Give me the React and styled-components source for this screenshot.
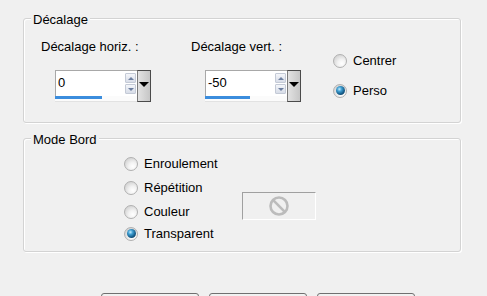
import React from "react";
import styled, { createGlobalStyle } from "styled-components";

const Global = createGlobalStyle`
  html, body { margin: 0; padding: 0; background: #f0f0f0; }
  body { font-family: "Liberation Sans", Arial, sans-serif; font-size: 13px; color: #000; }
`;

const Page = styled.div`
  width: 487px;
  height: 296px;
  overflow: hidden;
  box-sizing: border-box;
  padding: 18px 0 0 23px;
  background: #f0f0f0;
`;

const GroupBox = styled.div`
  position: relative;
  box-sizing: border-box;
  width: 438px;
  height: ${(p) => p.$h}px;
  margin-top: ${(p) => p.$mt || 0}px;
  border: 1px solid #d3d3d3;
  border-radius: 3px;
  box-shadow: inset 1px 1px 0 #ffffff, 1px 1px 0 #ffffff;
  padding: ${(p) => p.$pad};
`;

const Legend = styled.span`
  position: absolute;
  top: -7px;
  left: 7px;
  padding: 0 2px;
  line-height: 15px;
  background: #f0f0f0;
`;

const Row = styled.div`
  display: flex;
  align-items: flex-start;
`;

const Field = styled.div`
  display: flex;
  flex-direction: column;
  width: ${(p) => p.$w}px;
`;

const Label = styled.div`
  line-height: 15px;
  height: 15px;
`;

const Spin = styled.div`
  display: flex;
  margin: 16px 0 0 14px;
  height: 32px;
`;

const SpinMain = styled.div`
  display: flex;
  flex-direction: column;
  width: 82px;
`;

const Input = styled.div`
  box-sizing: border-box;
  height: 27px;
  display: flex;
  align-items: flex-start;
  justify-content: space-between;
  background: #fff;
  border: 1px solid #a8a8a8;
  border-right: none;
  border-bottom: none;
  padding: 3px 1px 0 2px;
`;

const Value = styled.span`
  line-height: 17px;
  font-size: 13px;
`;

const Arrows = styled.div`
  display: flex;
  flex-direction: column;
  gap: 1px;
  margin-top: -1px;
`;

const ArrowBtn = styled.div`
  box-sizing: border-box;
  width: 11px;
  height: 10px;
  border: 1px solid #c4cad6;
  border-radius: 1px;
  background: linear-gradient(#f4f6fa, #d8dde8);
  display: flex;
  align-items: center;
  justify-content: center;
  &::after {
    content: "";
    border-left: 3px solid transparent;
    border-right: 3px solid transparent;
    ${(p) => (p.$down ? "border-top: 3px solid #6d7f9f;" : "border-bottom: 3px solid #6d7f9f;")}
  }
`;

const Track = styled.div`
  height: 5px;
  background: #fbfbfb;
  border-bottom: 1px solid #e2e2e2;
`;

const Fill = styled.div`
  height: 3px;
  background: #3b8ddd;
`;

const Drop = styled.div`
  box-sizing: border-box;
  width: 14px;
  height: 32px;
  border: 1px solid #4a4a4a;
  border-left-color: #7a7a7a;
  background: linear-gradient(90deg, #e2e2e2, #c6c6c6);
  display: flex;
  justify-content: center;
  padding-top: 11px;
  &::after {
    content: "";
    width: 0;
    height: 0;
    border-left: 5px solid transparent;
    border-right: 5px solid transparent;
    border-top: 5px solid #000;
  }
`;

const RadioList = styled.div`
  display: flex;
  flex-direction: column;
  width: ${(p) => p.$w || "auto"};
  margin-top: ${(p) => p.$mt || 0}px;
`;

const RadioRow = styled.label`
  display: flex;
  align-items: center;
  height: 15px;
  margin-top: ${(p) => p.$mt || 0}px;
  line-height: 15px;
  gap: 6px;
`;

const RadioDot = styled.span`
  box-sizing: border-box;
  width: 14px;
  height: 14px;
  border-radius: 50%;
  border: 1px solid #b0b0b0;
  background: radial-gradient(circle at 65% 70%, #ffffff 0, #f2f2f2 35%, #d6d6d6 75%, #c8c8c8 100%);
  display: flex;
  align-items: center;
  justify-content: center;
  &::after {
    content: "";
    display: ${(p) => (p.$on ? "block" : "none")};
    width: 9px;
    height: 9px;
    border-radius: 50%;
    background: radial-gradient(circle at 38% 35%, #c4ecff 0, #3f9fd2 28%, #155b88 62%, #082a44 100%);
  }
`;

const ColorBox = styled.div`
  box-sizing: border-box;
  width: 74px;
  height: 28px;
  margin-top: 36px;
  border: 1px solid #a0a0a0;
  border-right-color: #ffffff;
  border-bottom-color: #ffffff;
  display: flex;
  align-items: center;
  justify-content: center;
`;

const Footer = styled.div`
  display: flex;
  gap: 10px;
  margin: 41px 0 0 78px;
`;

const Button = styled.div`
  box-sizing: border-box;
  width: 98px;
  height: 23px;
  border: 1px solid #707070;
  border-radius: 3px;
  background: linear-gradient(#f2f2f2, #ebebeb 50%, #dddddd 51%, #cfcfcf);
`;

function Radio({ on, children, mt }) {
  return (
    <RadioRow $mt={mt}>
      <RadioDot $on={on} />
      <span>{children}</span>
    </RadioRow>
  );
}

function SpinBox({ value, fill }) {
  return (
    <Spin>
      <SpinMain>
        <Input>
          <Value>{value}</Value>
          <Arrows>
            <ArrowBtn />
            <ArrowBtn $down />
          </Arrows>
        </Input>
        <Track>
          <Fill style={{ width: `${fill}px` }} />
        </Track>
      </SpinMain>
      <Drop />
    </Spin>
  );
}

export default function App() {
  return (
    <>
      <Global />
      <Page>
        <GroupBox $h={105} $pad="20px 0 0 17px">
          <Legend>Décalage</Legend>
          <Row>
            <Field $w={150}>
              <Label>Décalage horiz. :</Label>
              <SpinBox value="0" fill={47} />
            </Field>
            <Field $w={142}>
              <Label>Décalage vert. :</Label>
              <SpinBox value="-50" fill={45} />
            </Field>
            <RadioList $mt={14}>
              <Radio>Centrer</Radio>
              <Radio on mt={15}>Perso</Radio>
            </RadioList>
          </Row>
        </GroupBox>
        <GroupBox $h={114} $mt={15} $pad="17px 0 0 100px">
          <Legend>Mode Bord</Legend>
          <Row>
            <RadioList $w="118px">
              <Radio>Enroulement</Radio>
              <Radio mt={9}>Répétition</Radio>
              <Radio mt={9}>Couleur</Radio>
              <Radio on mt={7}>Transparent</Radio>
            </RadioList>
            <ColorBox>
              <svg width="22" height="22" viewBox="0 0 22 22">
                <circle cx="11" cy="11" r="8.5" fill="none" stroke="#bcbcbc" strokeWidth="2.6" />
                <line x1="5.2" y1="5.2" x2="16.8" y2="16.8" stroke="#bcbcbc" strokeWidth="2.6" />
              </svg>
            </ColorBox>
          </Row>
        </GroupBox>
        <Footer>
          <Button />
          <Button />
          <Button />
        </Footer>
      </Page>
    </>
  );
}
